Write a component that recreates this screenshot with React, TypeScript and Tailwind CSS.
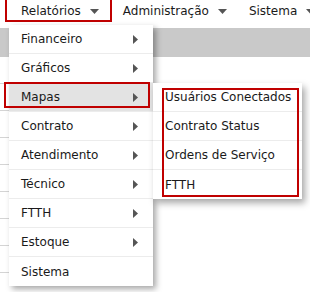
import React from 'react';

const mainItems: { label: string; sub: boolean }[] = [
  { label: 'Financeiro', sub: true },
  { label: 'Gráficos', sub: true },
  { label: 'Mapas', sub: true },
  { label: 'Contrato', sub: true },
  { label: 'Atendimento', sub: true },
  { label: 'Técnico', sub: true },
  { label: 'FTTH', sub: true },
  { label: 'Estoque', sub: true },
  { label: 'Sistema', sub: false },
];

const mapItems = ['Usuários Conectados', 'Contrato Status', 'Ordens de Serviço', 'FTTH'];

function DownArrow() {
  return (
    <svg width="9" height="5" viewBox="0 0 9 5" className="ml-[9px] shrink-0">
      <path d="M0 0H9L4.5 5Z" fill="#555" />
    </svg>
  );
}

function RightArrow() {
  return (
    <svg width="5" height="9" viewBox="0 0 5 9">
      <path d="M0 0V9L5 4.5Z" fill="#555" />
    </svg>
  );
}

export default function App() {
  return (
    <div
      className="relative w-[310px] h-[292px] overflow-hidden bg-white text-[12px] text-[#1a1a1a]"
      style={{ fontFamily: '"DejaVu Sans", Verdana, sans-serif' }}
    >
      {/* top nav */}
      <div className="flex items-start h-[28px] pl-[21px] pt-[3px] whitespace-nowrap">
        <div className="relative flex items-center h-[16px] shrink-0">
          <span>Relatórios</span>
          <DownArrow />
          <div className="absolute left-[-16px] right-[-13px] top-[-6px] bottom-[-3px] border-2 border-[#c00000]" />
        </div>
        <div className="flex items-center h-[16px] ml-[24px] shrink-0">
          <span>Administração</span>
          <DownArrow />
        </div>
        <div className="flex items-center h-[16px] ml-[22px] shrink-0">
          <span>Sistema</span>
          <DownArrow />
        </div>
      </div>

      {/* page behind */}
      <div className="h-[29px] bg-[#c9c9c9]" />
      <div className="w-[150px] flex flex-col">
        {Array.from({ length: 8 }).map((_, i) => (
          <div key={i} className="h-[27px] border-b border-[#d4d4d4] shrink-0" />
        ))}
      </div>

      {/* dropdown */}
      <div className="absolute left-[9px] top-[25px] w-[144px] bg-white shadow-[3px_3px_6px_rgba(0,0,0,0.35)] flex flex-col">
        {mainItems.map((it, i) => (
          <div
            key={it.label}
            className={
              'relative h-[29px] flex items-center justify-between pl-[12px] pr-[15px] ' +
              (i < mainItems.length - 1 ? 'border-b border-[#ececec] ' : '') +
              (it.label === 'Mapas' ? 'bg-[#e3e3e3]' : '')
            }
          >
            <span>{it.label}</span>
            {it.sub && <RightArrow />}
          </div>
        ))}
      </div>

      {/* highlight on Mapas */}
      <div className="absolute left-[4px] top-[82px] w-[146px] h-[26px] border-2 border-[#c00000]" />

      {/* submenu */}
      <div className="absolute left-[153px] top-[83px] w-[149px] bg-white shadow-[3px_4px_7px_rgba(0,0,0,0.35)] flex flex-col">
        {mapItems.map((label, i) => (
          <div
            key={label}
            className={
              'h-[29px] flex items-center pl-[12px] ' +
              (i < mapItems.length - 1 ? 'border-b border-[#ececec]' : '')
            }
          >
            {label}
          </div>
        ))}
        <div className="absolute left-[9px] top-[5px] right-[3px] bottom-[2px] border-2 border-[#c00000]" />
      </div>
    </div>
  );
}
